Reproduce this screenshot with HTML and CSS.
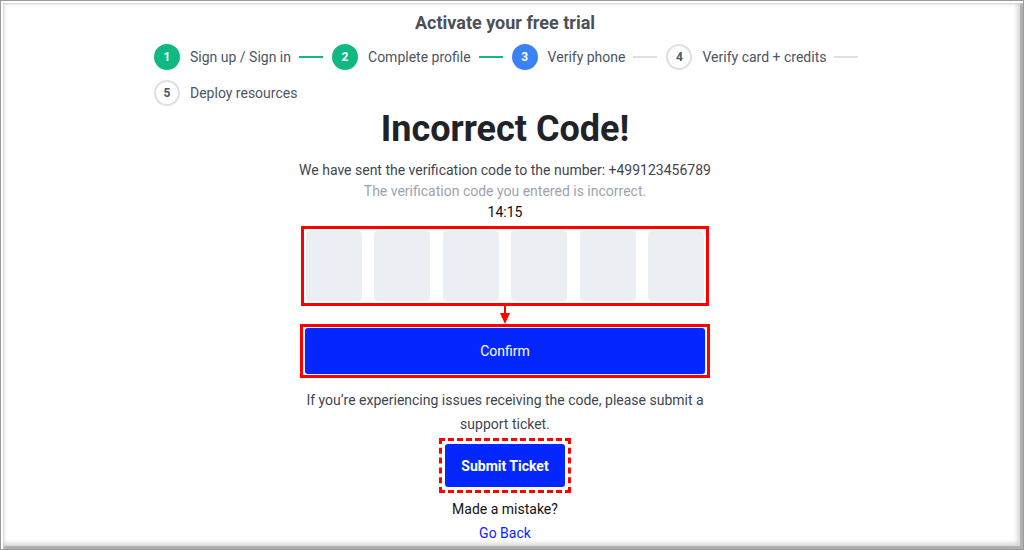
FILE: index.html
```html
<!DOCTYPE html>
<html lang="en">
<head>
<meta charset="utf-8">
<title>Activate your free trial</title>
<link rel="stylesheet" href="styles.css">
</head>
<body>
<div class="frame">
  <div class="content">
    <h2 class="title">Activate your free trial</h2>
    <ol class="stepper">
      <li class="step done"><span class="dot">1</span><span class="label">Sign up / Sign in</span><span class="line"></span></li>
      <li class="step done"><span class="dot">2</span><span class="label">Complete profile</span><span class="line"></span></li>
      <li class="step current"><span class="dot">3</span><span class="label">Verify phone</span><span class="line"></span></li>
      <li class="step"><span class="dot">4</span><span class="label">Verify card + credits</span><span class="line"></span></li>
      <li class="step"><span class="dot">5</span><span class="label">Deploy resources</span></li>
    </ol>
    <h1 class="heading">Incorrect Code!</h1>
    <p class="sent">We have sent the verification code to the number: +499123456789</p>
    <p class="error">The verification code you entered is incorrect.</p>
    <p class="timer">14:15</p>
    <div class="otp">
      <input class="cell" type="text" maxlength="1">
      <input class="cell" type="text" maxlength="1">
      <input class="cell" type="text" maxlength="1">
      <input class="cell" type="text" maxlength="1">
      <input class="cell" type="text" maxlength="1">
      <input class="cell" type="text" maxlength="1">
    </div>
    <div class="arrow">
      <svg width="12" height="18" viewBox="0 0 12 18"><rect x="5" y="0" width="2" height="8" fill="#ff0000"/><polygon points="1,7 11,7 6,18" fill="#ff0000"/></svg>
    </div>
    <div class="confirm-wrap">
      <button class="btn confirm">Confirm</button>
    </div>
    <p class="help">If you’re experiencing issues receiving the code, please submit a support ticket.</p>
    <div class="ticket-wrap">
      <button class="btn ticket">Submit Ticket</button>
    </div>
    <p class="mistake">Made a mistake?</p>
    <a class="back" href="#">Go Back</a>
  </div>
</div>
</body>
</html>
```
FILE: styles.css
```css
* { box-sizing: border-box; }
html, body { margin: 0; padding: 0; background: #fff; }
body { font-family: Roboto, "Liberation Sans", Arial, sans-serif; }

.frame {
  width: 1024px;
  height: 550px;
  border: 1px solid #9a9a9a;
  box-shadow: inset 2px 2px 0 #fff, inset 3px 3px 3px #c8c8c8, inset -3px -3px 0 #b0b0b0, inset -6px -6px 4px #d8d8d8;
  overflow: hidden;
  padding-right: 14px;
}

.content {
  display: flex;
  flex-direction: column;
  align-items: center;
  padding-top: 11px;
}

.title {
  margin: 0;
  font-size: 18px;
  line-height: 22px;
  font-weight: 700;
  color: #4b5058;
}

.stepper {
  list-style: none;
  margin: 10px 0 0 16px;
  padding: 0;
  width: 718px;
  display: flex;
  flex-wrap: wrap;
  column-gap: 9px;
  row-gap: 10px;
}
.step {
  display: flex;
  align-items: center;
  height: 26px;
}
.dot {
  width: 26px;
  height: 26px;
  border-radius: 50%;
  display: flex;
  align-items: center;
  justify-content: center;
  font-size: 12px;
  font-weight: 700;
  color: #4b5563;
  background: #fff;
  border: 2px solid #dcdfe4;
  flex: none;
}
.step.done .dot { background: #10b981; border-color: #10b981; color: #fff; }
.step.current .dot { background: #3b82f6; border-color: #3b82f6; color: #fff; }
.label {
  margin-left: 10px;
  font-size: 14px;
  color: #4b5563;
  white-space: nowrap;
}
.line {
  margin-left: 8px;
  width: 24px;
  height: 2px;
  background: #dcdfe4;
}
.step.done .line { background: #10b981; }

.heading {
  margin: 3px 0 0 0;
  font-size: 36px;
  line-height: 40px;
  font-weight: 700;
  color: #1f2227;
}

.sent, .error, .timer {
  margin: 0;
  font-size: 14px;
  line-height: 21px;
}
.sent { margin-top: 11px; color: #3f4550; }
.error { color: #9ca3af; }
.timer { color: #111; }

.otp {
  margin-top: 3px;
  width: 408px;
  height: 80px;
  border: 3px solid #ff0000;
  padding: 2px;
  display: flex;
  justify-content: space-between;
}
.cell {
  width: 56px;
  height: 70px;
  border: none;
  border-radius: 4px;
  background: #ebeff3;
  outline: none;
}

.arrow {
  height: 18px;
  display: flex;
  justify-content: center;
}
.arrow svg { display: block; }

.confirm-wrap {
  width: 410px;
  height: 54px;
  border: 3px solid #ff0000;
  padding: 1px 2px;
  display: flex;
}
.btn {
  border: none;
  background: #0527ff;
  color: #fff;
  font-family: inherit;
  font-size: 14px;
  border-radius: 3px;
  cursor: pointer;
}
.confirm {
  flex: 1;
  box-shadow: 0 0 0 1px #e8ecff;
}

.help {
  margin: 10px 0 0 0;
  max-width: 410px;
  text-align: center;
  font-size: 14px;
  line-height: 24px;
  color: #3f4550;
}

.ticket-wrap {
  margin-top: 2px;
  width: 132px;
  height: 55px;
  border: 3px dashed #ff0000;
  padding: 3px;
  display: flex;
}
.ticket {
  flex: 1;
  font-weight: 700;
  font-size: 14px;
}

.mistake {
  margin: 4px 0 0 0;
  font-size: 14px;
  line-height: 24px;
  color: #111;
}
.back {
  font-size: 14px;
  line-height: 24px;
  color: #0527ff;
  text-decoration: none;
}
```
